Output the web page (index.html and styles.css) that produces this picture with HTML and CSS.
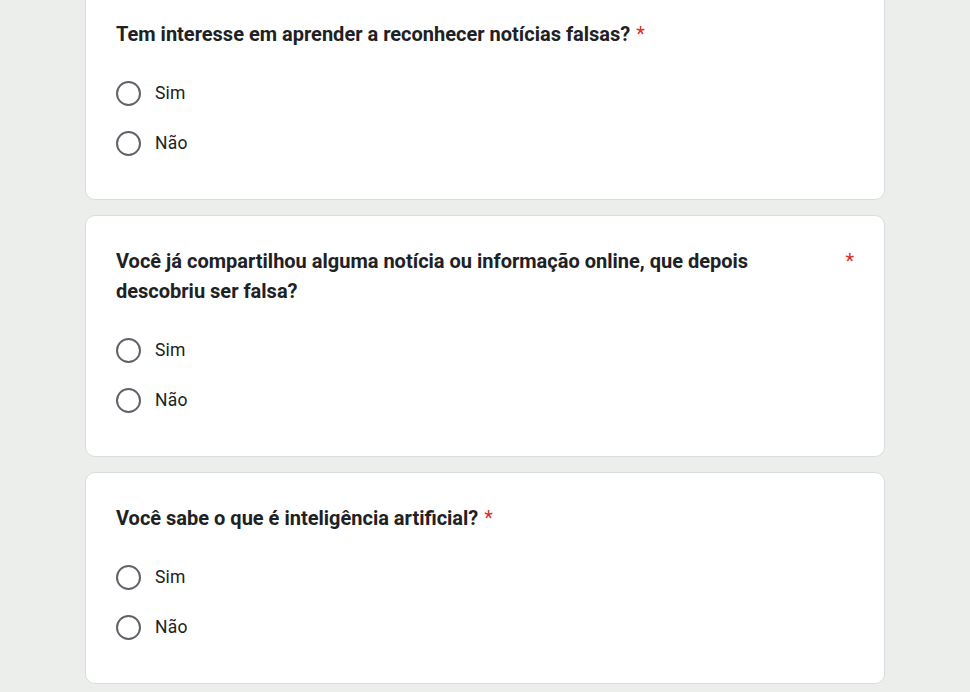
FILE: index.html
```html
<!DOCTYPE html>
<html lang="pt">
<head>
<meta charset="utf-8">
<link rel="stylesheet" href="styles.css">
</head>
<body>
<main class="form">
  <section class="card">
    <div class="title"><span class="title-text">Tem interesse em aprender a reconhecer notícias falsas?</span><span class="req">*</span></div>
    <div class="options">
      <label class="option"><span class="radio"></span><span class="opt-text">Sim</span></label>
      <label class="option"><span class="radio"></span><span class="opt-text">Não</span></label>
    </div>
  </section>
  <section class="card">
    <div class="title split"><span class="title-text">Você já compartilhou alguma notícia ou informação online, que depois descobriu ser falsa?</span><span class="req">*</span></div>
    <div class="options">
      <label class="option"><span class="radio"></span><span class="opt-text">Sim</span></label>
      <label class="option"><span class="radio"></span><span class="opt-text">Não</span></label>
    </div>
  </section>
  <section class="card">
    <div class="title"><span class="title-text">Você sabe o que é inteligência artificial?</span><span class="req">*</span></div>
    <div class="options">
      <label class="option"><span class="radio"></span><span class="opt-text">Sim</span></label>
      <label class="option"><span class="radio"></span><span class="opt-text">Não</span></label>
    </div>
  </section>
</main>
</body>
</html>
```
FILE: styles.css
```css
html, body {
  margin: 0;
  padding: 0;
  background: #eceeec;
  font-family: Roboto, "Liberation Sans", sans-serif;
  color: #202124;
  overflow: hidden;
}
.form {
  width: 800px;
  margin: -12px auto 0 85px;
  display: flex;
  flex-direction: column;
  gap: 15px;
}
.card {
  background: #fff;
  border: 1px solid #dadce0;
  border-radius: 10px;
  padding: 30px 30px 31px 30px;
  box-sizing: border-box;
  width: 800px;
}
.title {
  display: flex;
  align-items: flex-start;
  font-size: 20px;
  font-weight: 700;
  line-height: 30px;
  letter-spacing: 0;
}
.split .title-text {
  flex: 1;
}
.req {
  color: #d93025;
  font-weight: 400;
  padding-left: 6px;
}
.options {
  display: flex;
  flex-direction: column;
  margin-top: 19px;
}
.option {
  display: flex;
  align-items: center;
  height: 50px;
}
.radio {
  width: 25px;
  height: 25px;
  box-sizing: border-box;
  border: 2.5px solid #5f6368;
  border-radius: 50%;
  margin-right: 14px;
  flex: none;
}
.opt-text {
  font-size: 17.5px;
  letter-spacing: 0.2px;
}
```
